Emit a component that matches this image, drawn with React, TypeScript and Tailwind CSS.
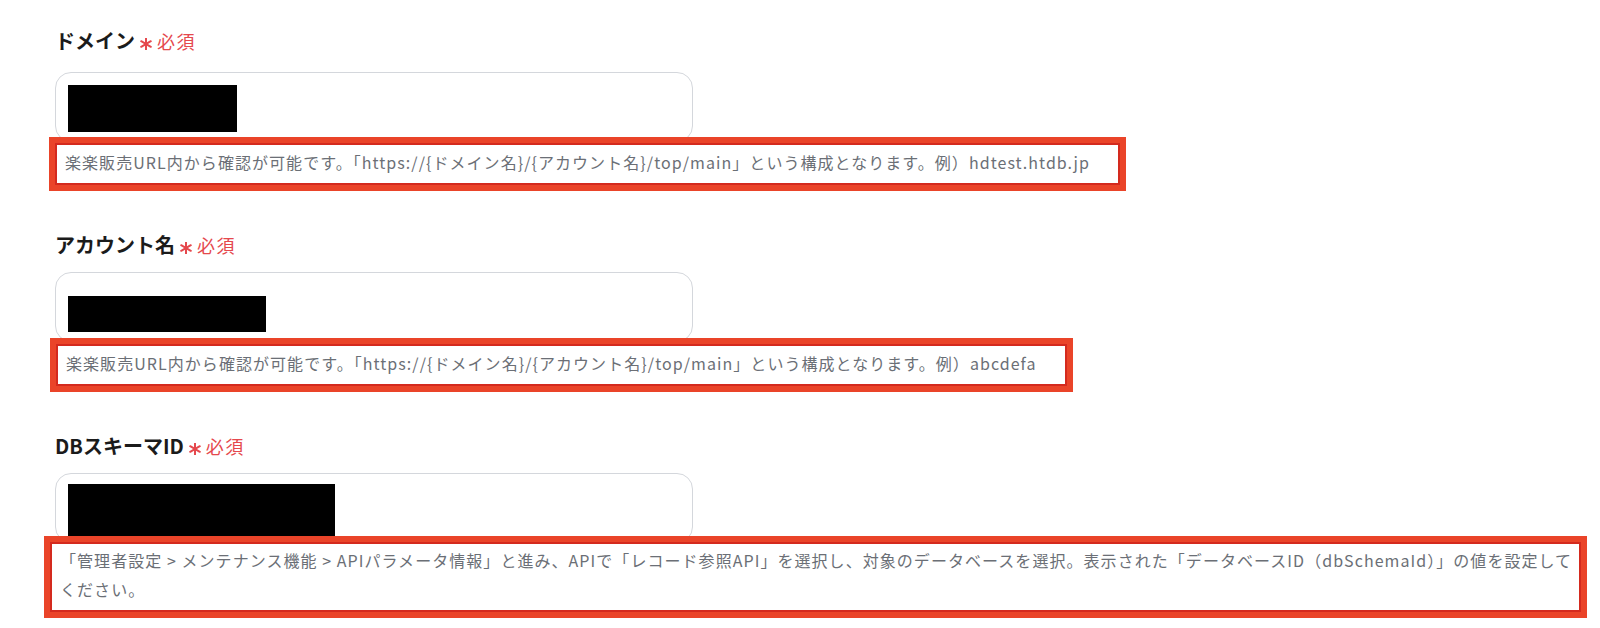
const font = "font-['Noto_Sans_CJK_JP','Noto_Sans',sans-serif]";

function Asterisk() {
  return (
    <svg width="12" height="12" viewBox="0 0 12 12" className="translate-y-[3px]">
      <g stroke="#e5484d" strokeWidth="2" strokeLinecap="round">
        <line x1="6" y1="0.5" x2="6" y2="11.5" />
        <line x1="1.2" y1="3.2" x2="10.8" y2="8.8" />
        <line x1="1.2" y1="8.8" x2="10.8" y2="3.2" />
      </g>
    </svg>
  );
}

function Label({ text }: { text: string }) {
  return (
    <div className="flex h-[28px] items-center gap-[5px]">
      <span className="text-[20px] font-bold leading-[28px] text-[#1b1b1b]">{text}</span>
      <Asterisk />
      <span className="text-[18px] leading-[28px] tracking-[0.08em] text-[#e5484d]">必須</span>
    </div>
  );
}

function Field({ redact }: { redact: string }) {
  return (
    <div className="h-[70px] w-[638px] overflow-hidden rounded-[16px] border border-[#d4d7dc] bg-white pl-[12px]">
      <div className={`bg-black ${redact}`} />
    </div>
  );
}

function Note({
  children,
  className,
  textClass,
}: {
  children: React.ReactNode;
  className: string;
  textClass: string;
}) {
  return (
    <div className={`relative z-10 border-[6px] border-[#ea4429] ${className}`}>
      <div className="border-2 border-[#d42a1e] bg-white">
        <p className={`pl-[8px] text-[16px] tracking-[1.05px] text-[#6b6f76] ${textClass}`}>
          {children}
        </p>
      </div>
    </div>
  );
}

export default function App() {
  return (
    <div className={`h-[628px] w-[1600px] overflow-hidden bg-white pl-[55px] pt-[27px] ${font}`}>
      <section>
        <Label text="ドメイン" />
        <div className="mt-[17px]">
          <Field redact="mt-[12px] h-[47px] w-[169px]" />
        </div>
        <Note className="-ml-[6px] -mt-[5px] w-fit" textClass="pb-[9px] pr-[28px] pt-[5px] leading-[24px]">
          楽楽販売URL内から確認が可能です。「https://{"{"}ドメイン名{"}"}/{"{"}アカウント名{"}"}/top/main」という構成となります。例）hdtest.htdb.jp
        </Note>
      </section>

      <section className="mt-[40px]">
        <Label text="アカウント名" />
        <div className="mt-[13px]">
          <Field redact="mt-[23px] h-[36px] w-[198px]" />
        </div>
        <Note className="-ml-[5px] -mt-[4px] w-fit" textClass="pb-[9px] pr-[28px] pt-[5px] leading-[24px]">
          楽楽販売URL内から確認が可能です。「https://{"{"}ドメイン名{"}"}/{"{"}アカウント名{"}"}/top/main」という構成となります。例）abcdefa
        </Note>
      </section>

      <section className="mt-[40px]">
        <Label text="DBスキーマID" />
        <div className="mt-[13px]">
          <Field redact="mt-[10px] h-[60px] w-[267px]" />
        </div>
        <Note className="-ml-[11px] -mt-[7px] w-[1543px]" textClass="pb-[6px] pr-[4px] pt-[2px] leading-[29px]">
          「管理者設定 &gt; メンテナンス機能 &gt; APIパラメータ情報」と進み、APIで「レコード参照API」を選択し、対象のデータベースを選択。表示された「データベースID（dbSchemaId）」の値を設定してください。
        </Note>
      </section>
    </div>
  );
}
